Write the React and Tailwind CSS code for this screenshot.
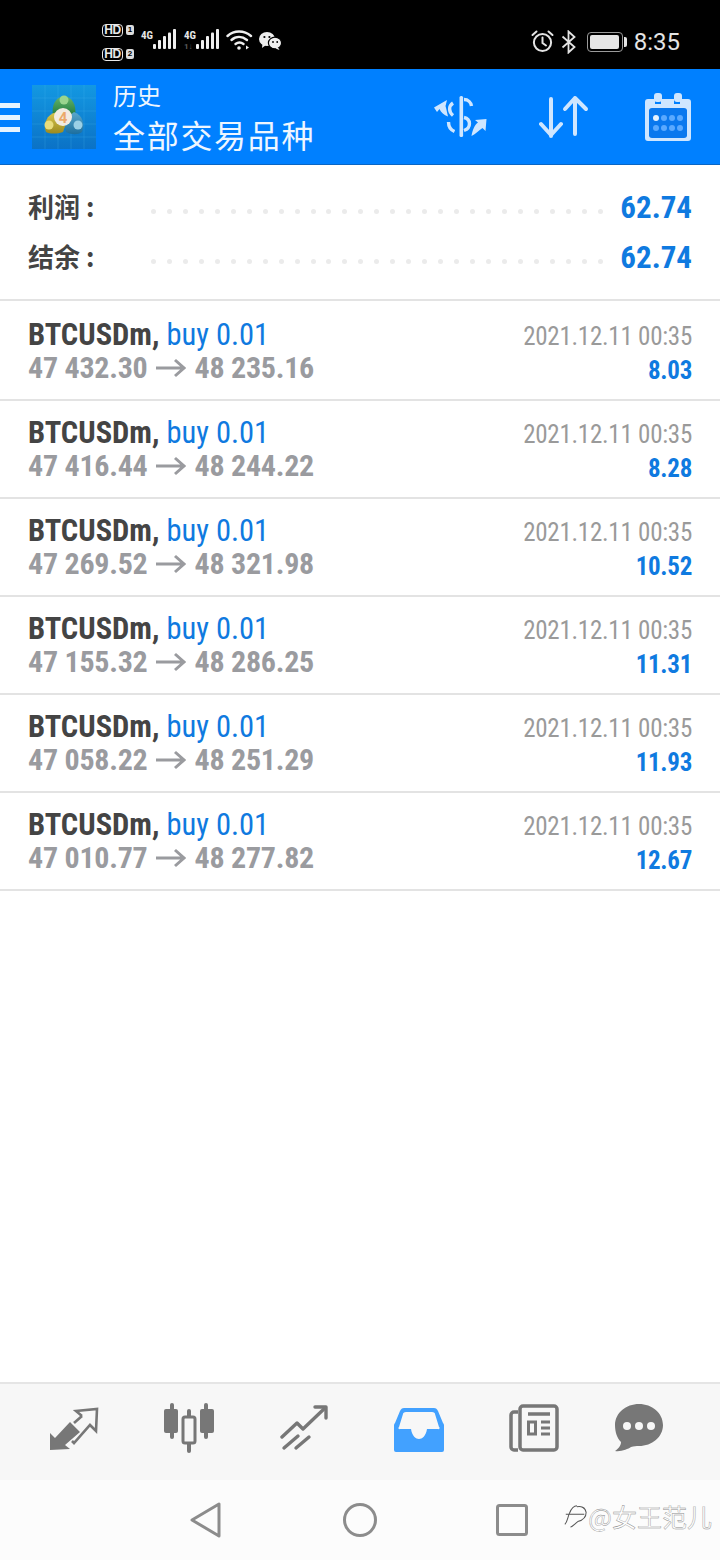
import React from 'react';

const trades = [
    { from: '47 432.30', to: '48 235.16', profit: '8.03' },
    { from: '47 416.44', to: '48 244.22', profit: '8.28' },
    { from: '47 269.52', to: '48 321.98', profit: '10.52' },
    { from: '47 155.32', to: '48 286.25', profit: '11.31' },
    { from: '47 058.22', to: '48 251.29', profit: '11.93' },
    { from: '47 010.77', to: '48 277.82', profit: '12.67' },
];

const dots = Array.from({ length: 29 }, (_, i) => i);

const HdBadge = ({ n }) => (
    <div className="flex items-center gap-[3px] h-[13px]">
        <span className="flex items-center justify-center w-[21px] h-[13px] rounded-[4px] border-[1.5px] border-[#e8e8e8] text-[#e8e8e8] text-[12px] font-bold leading-none tracking-[-0.5px] font-['Liberation_Sans',sans-serif]">HD</span>
        <span className="flex items-center justify-center w-[8px] h-[10px] rounded-[2px] bg-[#dcdcdc] text-black text-[8px] font-bold leading-none font-['Liberation_Sans',sans-serif]">{n}</span>
    </div>
);

const Signal = ({ dim }) => (
    <div className="relative w-[36px] h-[21px]">
        <span className="absolute left-0 top-[1px] text-[#e6e6e6] text-[11px] font-bold leading-none font-['Roboto',sans-serif] [font-stretch:75%]">4G</span>
        {dim && <span className="absolute left-0 top-[14px] text-[#5c5c5c] text-[8px] font-bold leading-none font-['Roboto',sans-serif]">1↓</span>}
        <svg className="absolute left-[12px] top-0" width="24" height="21" viewBox="0 0 24 21" fill="#efefef">
            <rect x="0" y="15" width="3" height="5" rx="1" />
            <rect x="5" y="11" width="3" height="9" rx="1" />
            <rect x="10" y="7" width="3" height="13" rx="1" />
            <rect x="15" y="3.5" width="3" height="16.5" rx="1" />
            <rect x="20" y="0" width="3" height="20" rx="1" />
        </svg>
    </div>
);

const StatusBar = () => (
    <div className="relative flex items-center justify-between h-[69px] bg-black pl-[102px] pr-[40px] shrink-0">
        <div className="flex items-center mt-[7px]">
            <div className="flex flex-col gap-[11px] mt-[8px]">
                <HdBadge n="1" />
                <HdBadge n="2" />
            </div>
            <div className="flex items-center gap-[7px] ml-[7px] mt-[3px]">
                <Signal />
                <Signal dim />
            </div>
            <svg className="ml-[6px] mt-[3px]" width="27" height="22" viewBox="0 0 27 22" fill="none" stroke="#efefef" strokeWidth="2.4" strokeLinecap="round">
                <path d="M1.5 7C8 1 18 1 25 7" />
                <path d="M5.5 11C10 7 16 7 21 11" />
                <path d="M9.5 15C12 13 15 13 17.5 15" />
                <circle cx="13" cy="19" r="1.8" fill="#efefef" stroke="none" />
                <path d="M20 20.5V16.5l3 2-3 2" fill="#efefef" stroke="none" />
            </svg>
            <svg className="ml-[6px] mt-[5px]" width="23" height="18" viewBox="0 0 23 18" fill="#efefef">
                <ellipse cx="8" cy="7" rx="8" ry="7" />
                <path d="M3.5 11.5L3 16l4-3z" />
                <ellipse cx="16" cy="11" rx="6.6" ry="5.8" stroke="#000" strokeWidth="1.2" />
                <path d="M19 15.5l1.5 2.5-4-1.5z" />
                <circle cx="5.4" cy="5" r="1.1" fill="#000" />
                <circle cx="10.4" cy="5" r="1.1" fill="#000" />
                <circle cx="14" cy="10" r="0.9" fill="#000" />
                <circle cx="18.2" cy="10" r="0.9" fill="#000" />
            </svg>
        </div>
        <div className="flex items-center mt-[14px]">
            <svg width="23" height="23" viewBox="0 0 23 23" fill="none" stroke="#e4e4e4" strokeWidth="2" strokeLinecap="round">
                <circle cx="11.5" cy="12.5" r="8.6" />
                <path d="M11.5 7.5v5.5l3.5 2.5" />
                <path d="M1.5 5L5.5 1.5M21.5 5L17.5 1.5" />
            </svg>
            <svg className="ml-[7px]" width="16" height="24" viewBox="0 0 16 24" fill="none" stroke="#e4e4e4" strokeWidth="1.8">
                <path d="M1.5 6.5L13.5 17l-6 5.5V1.5l6 5.5L1.5 17.5" />
            </svg>
            <div className="flex items-center ml-[10px]">
                <div className="flex items-center w-[36px] h-[20px] rounded-[4px] border border-[#9a9a9a] p-[2px]">
                    <div className="w-[29px] h-full rounded-[2px] bg-[#e6e6e6]" />
                </div>
                <div className="w-[3px] h-[10px] ml-[1px] rounded-r-[2px] bg-[#e6e6e6]" />
            </div>
            <span className="ml-[7px] text-[24px] leading-none text-[#e4e4e4] font-['Roboto',sans-serif]">8:35</span>
        </div>
    </div>
);

const MtLogo = () => (
    <svg width="64" height="64" viewBox="0 0 64 64">
        <defs>
            <linearGradient id="logoBg" x1="0" y1="0" x2="0" y2="1">
                <stop offset="0" stopColor="#1398e2" />
                <stop offset="1" stopColor="#0b72c6" />
            </linearGradient>
            <linearGradient id="logoGreen" x1="0" y1="0" x2="0" y2="1">
                <stop offset="0" stopColor="#67b56a" />
                <stop offset="1" stopColor="#1f7a3e" />
            </linearGradient>
            <linearGradient id="logoYellow" x1="0" y1="0" x2="0" y2="1">
                <stop offset="0" stopColor="#d8c84e" />
                <stop offset="1" stopColor="#9c8a20" />
            </linearGradient>
            <linearGradient id="logoBlue" x1="0" y1="0" x2="0" y2="1">
                <stop offset="0" stopColor="#5aa8cc" />
                <stop offset="1" stopColor="#1c6e9e" />
            </linearGradient>
        </defs>
        <rect width="64" height="64" fill="url(#logoBg)" />
        <path d="M13 0v64M26 0v64M39 0v64M52 0v64M0 13h64M0 26h64M0 39h64M0 52h64" stroke="#4cbcf0" strokeWidth="0.5" opacity="0.45" />
        <path d="M21 31C19 20 24 12 32 11c8 1 13 9 11 20z" fill="url(#logoGreen)" />
        <circle cx="32" cy="15" r="4.5" fill="#9ad48e" />
        <path d="M14 47C11 40 14 29 25 27l10 9-4 11c-6 2-13 2-17 0z" fill="url(#logoYellow)" />
        <circle cx="17" cy="40" r="4.5" fill="#e8dc7c" />
        <path d="M50 47c3-7 1-17-8-20l-10 8 2 12c6 3 12 3 16 0z" fill="url(#logoBlue)" />
        <circle cx="46" cy="40" r="4.5" fill="#9ad0e6" />
        <circle cx="31" cy="32" r="9" fill="#f2ebe0" />
        <text x="31" y="37.5" textAnchor="middle" fontSize="15" fontWeight="700" fill="#eba96a" fontFamily="Roboto, sans-serif">4</text>
    </svg>
);

const Header = () => (
    <div className="flex items-center h-[96px] bg-[#0080ff] border-b border-[#0a66c4] shrink-0">
        <div className="flex flex-col gap-[7px] w-[20px] mt-[1px]">
            <div className="h-[5px] bg-[#e6f3ff]" />
            <div className="h-[5px] bg-[#e6f3ff]" />
            <div className="h-[5px] bg-[#e6f3ff]" />
        </div>
        <div className="ml-[12px]">
            <MtLogo />
        </div>
        <div className="flex flex-col gap-[6px] ml-[17px] font-['Noto_Sans_CJK_SC',sans-serif] text-[#eef6ff]">
            <span className="text-[24px] leading-[28px]">历史</span>
            <span className="text-[32px] leading-[38px] tracking-[1.7px]">全部交易品种</span>
        </div>
        <div className="flex items-center ml-auto mr-[29px]">
            <svg width="54" height="44" viewBox="0 0 54 44" fill="#cfe6ff">
                <rect x="26.5" y="1" width="3.6" height="41" rx="1.5" />
                <path d="M31 4.5C35 4.5 38 7.5 38.5 11M20 8C15.5 11 15.5 17 20 20.5M15.5 27C15.5 32 18 35 21.5 36.5M31 22.5C38 24 38.5 33 31 35.5" fill="none" stroke="#cfe6ff" strokeWidth="3.4" />
                <path d="M1 12.5L14 5l-1.500 6c1 3 1.500 7 2.500 10.500-4-1.500-7-4-8.500-7.500L4 17z" />
                <path d="M38.500 41c1-6 3-11 6.500-13.500l-3-2.500 11.500-1-1 12-3-3c-3 2-7 6-11 8z" />
            </svg>
            <svg className="ml-[52px]" width="50" height="44" viewBox="0 0 50 44" fill="none" stroke="#cfe6ff" strokeWidth="4" strokeLinecap="round" strokeLinejoin="round">
                <path d="M12 4v37M2 29l10 11 10-11" />
                <path d="M36 3v36M26 14L36 3l11 11" />
            </svg>
            <svg className="ml-[56px]" width="46" height="48" viewBox="0 0 46 48" fill="#cfe6ff">
                <path fillRule="evenodd" d="M3 6h7v5h6V6h13v5h6V6h8a3 3 0 0 1 3 3v36a3 3 0 0 1-3 3H3a3 3 0 0 1-3-3V9a3 3 0 0 1 3-3zM7 16a3 3 0 0 0-3 3v22a3 3 0 0 0 3 3h32a3 3 0 0 0 3-3V19a3 3 0 0 0-3-3z" />
                <rect x="9" y="0" width="8" height="9" rx="3" />
                <rect x="29" y="0" width="8" height="9" rx="3" />
                <rect x="4" y="15" width="38" height="30" rx="3" fill="#0a78ee" />
                <circle cx="11" cy="25" r="3" fill="#e6f2ff" />
                <circle cx="19" cy="25" r="3" fill="#5aa9ff" />
                <circle cx="27" cy="25" r="3" fill="#5aa9ff" />
                <circle cx="35" cy="25" r="3" fill="#5aa9ff" />
                <circle cx="11" cy="35" r="3" fill="#5aa9ff" />
                <circle cx="19" cy="35" r="3" fill="#5aa9ff" />
                <circle cx="27" cy="35" r="3" fill="#5aa9ff" />
                <circle cx="35" cy="35" r="3" fill="#5aa9ff" />
            </svg>
        </div>
    </div>
);

const SummaryRow = ({ label, value }) => (
    <div className="flex items-center h-[50px]">
        <span className="w-[123px] mb-[2px] text-[26px] font-bold text-[#444444] font-['Noto_Sans_CJK_SC',sans-serif]">{label}</span>
        <div className="flex justify-between w-[452px] mt-[10px]">
            {dots.map((d) => (
                <span key={d} className="w-[5px] h-[5px] rounded-full bg-[#ebebeb]" />
            ))}
        </div>
        <span className="ml-auto mt-[4px] text-[31px] font-bold text-[#0f7ae0] font-['Roboto',sans-serif] [font-stretch:75%]">{value}</span>
    </div>
);

const TradeRow = ({ trade }) => (
    <div className="flex justify-between h-[98px] pl-[28px] pr-[28px] pt-[15px] border-b-2 border-[#e3e3e3] font-['Roboto',sans-serif] [font-stretch:75%]">
        <div className="flex flex-col">
            <div className="text-[30.5px] leading-[34px] whitespace-nowrap">
                <span className="font-bold text-[#444444]">BTCUSDm,</span>
                <span className="text-[#0f7ae0]"> buy 0.01</span>
            </div>
            <div className="flex items-center text-[30px] leading-[32px] font-bold tracking-[-0.25px] text-[#9a9b9f] whitespace-nowrap">
                <span>{trade.from}</span>
                <svg className="ml-[8px] mr-[9px]" width="30" height="20" viewBox="0 0 30 20" fill="none" stroke="#9a9b9f" strokeWidth="3">
                    <path d="M0 10h28M19 2l9 8-9 8" />
                </svg>
                <span>{trade.to}</span>
            </div>
        </div>
        <div className="flex flex-col items-end mt-[1px]">
            <span className="text-[25px] leading-[36px] tracking-[-0.25px] text-[#9a9a9a] whitespace-nowrap">2021.12.11 00:35</span>
            <span className="text-[25px] leading-[32px] tracking-[-0.3px] font-bold text-[#0f7ae0]">{trade.profit}</span>
        </div>
    </div>
);

const BottomNav = () => (
    <div className="flex items-center h-[98px] pb-[8px] bg-[#f7f7f7] border-t-2 border-[#e5e5e5] shrink-0">
        <div className="flex items-center justify-center w-[115px] ml-[16px] mt-[1px]">
            <svg width="50" height="44" viewBox="0 0 50 44" fill="#777777">
                <path d="M1 43L1 26l5 5L21 15l10 10-15 13 5 4z" />
                <path d="M33 9L27 4l21-2-1 22-6-6-16 18-2-2" fill="none" stroke="#777777" strokeWidth="2.6" />
                <path d="M33 9l-8 7" fill="none" stroke="#777777" strokeWidth="2.6" />
            </svg>
        </div>
        <div className="flex items-center justify-center w-[115px]">
            <svg width="52" height="50" viewBox="0 0 52 50" fill="#777777">
                <rect x="7" y="0" width="4" height="36" rx="2" />
                <rect x="1" y="6" width="14" height="24" rx="2" />
                <rect x="41" y="0" width="4" height="36" rx="2" />
                <rect x="37" y="6" width="14" height="24" rx="2" />
                <rect x="24" y="6" width="4" height="44" rx="2" />
                <rect x="20" y="14" width="12" height="26" rx="2" fill="#f7f7f7" stroke="#777777" strokeWidth="3" />
            </svg>
        </div>
        <div className="flex items-center justify-center w-[115px]">
            <svg width="48" height="46" viewBox="0 0 48 46" fill="none" stroke="#777777" strokeWidth="3.4" strokeLinecap="round" strokeLinejoin="round">
                <path d="M2 32l15-14 6 6L45 3" />
                <path d="M35 2h11v11" />
                <path d="M4 43l14-12M16 43l13-11" />
            </svg>
        </div>
        <div className="flex items-center justify-center w-[115px] mt-[3px]">
            <svg width="50" height="44" viewBox="0 0 50 44">
                <path d="M10 0h30c2 0 3 1 4 3l5 12c1 1 1 2 1 3v24a2 2 0 0 1-2 2H2a2 2 0 0 1-2-2V18c0-1 0-2 1-3L6 3c1-2 2-3 4-3z" fill="#42a1ff" />
                <path d="M12 4h26c2 0 3 1 3 2l4 13a1 1 0 0 1-1 2H33c-1 7-5 10-8 10s-7-3-8-10H6a1 1 0 0 1-1-2L9 6c0-1 1-2 3-2z" fill="#f7f7f7" />
            </svg>
        </div>
        <div className="flex items-center justify-center w-[115px]">
            <svg width="50" height="48" viewBox="0 0 50 48" fill="none" stroke="#777777">
                <path d="M9 8H5a3 3 0 0 0-3 3v32a3 3 0 0 0 3 3h4" strokeWidth="3.5" />
                <rect x="11" y="2" width="37" height="44" rx="3" strokeWidth="3.5" />
                <path d="M19 10h22" strokeWidth="3.5" />
                <rect x="19.5" y="18" width="7" height="12" strokeWidth="3" />
                <path d="M32 18h9M32 24h9M32 30h9" strokeWidth="3" />
            </svg>
        </div>
        <div className="flex items-center justify-center w-[95px]">
            <svg width="48" height="48" viewBox="0 0 48 48">
                <path d="M24 0c13 0 24 9 24 21S37 42 24 42c-3 0-5 0-8 1-3 2-10 5-16 4 3-2 6-5 6-9C2 34 0 28 0 21 0 9 11 0 24 0z" fill="#777777" />
                <circle cx="12" cy="22" r="4" fill="#f7f7f7" />
                <circle cx="24" cy="22" r="4" fill="#f7f7f7" />
                <circle cx="36" cy="22" r="4" fill="#f7f7f7" />
            </svg>
        </div>
    </div>
);

const SystemNav = () => (
    <div className="relative flex items-center h-[80px] pb-[1px] bg-[#fcfcfc] shrink-0">
        <svg className="ml-[189px]" width="32" height="36" viewBox="0 0 32 36" fill="none" stroke="#8c8c8c" strokeWidth="3" strokeLinejoin="round">
            <path d="M30 2v32L3 18z" />
        </svg>
        <svg className="ml-[121px]" width="36" height="36" viewBox="0 0 36 36" fill="none" stroke="#8c8c8c" strokeWidth="3">
            <circle cx="18" cy="18" r="15.5" />
        </svg>
        <svg className="ml-[118px]" width="32" height="32" viewBox="0 0 32 32" fill="none" stroke="#8c8c8c" strokeWidth="3">
            <rect x="1.500" y="1.500" width="29" height="29" rx="2" />
        </svg>
        <div className="absolute right-[8px] top-[21px] flex items-center text-[25px] leading-none text-white font-['Noto_Sans_CJK_SC',sans-serif] [-webkit-text-stroke:0.4px_#8a8a8a] whitespace-nowrap">
            <svg width="25" height="30" viewBox="0 0 27 30" fill="none" stroke="#555555" strokeWidth="1.100">
                <path d="M2 24c3-3 3-8 5-12 2-5 4-8 8-8M3 13h20M15 5c5-1 9 1 10 6 0 6-5 9-9 10-3 2-5 5-8 6" />
            </svg>
            <span>@女王范儿</span>
        </div>
    </div>
);

export default function App() {
    return (
        <div className="flex flex-col w-[720px] h-[1560px] bg-white overflow-hidden">
            <StatusBar />
            <Header />
            <div className="flex flex-col justify-center h-[136px] pl-[28px] pr-[28px] pb-[2px] border-b-2 border-[#e3e3e3] shrink-0">
                <SummaryRow label="利润 :" value="62.74" />
                <SummaryRow label="结余 :" value="62.74" />
            </div>
            <div className="flex flex-col pt-[2px]">
                {trades.map((trade, i) => (
                    <TradeRow key={i} trade={trade} />
                ))}
            </div>
            <div className="flex-1" />
            <BottomNav />
            <SystemNav />
        </div>
    );
}
